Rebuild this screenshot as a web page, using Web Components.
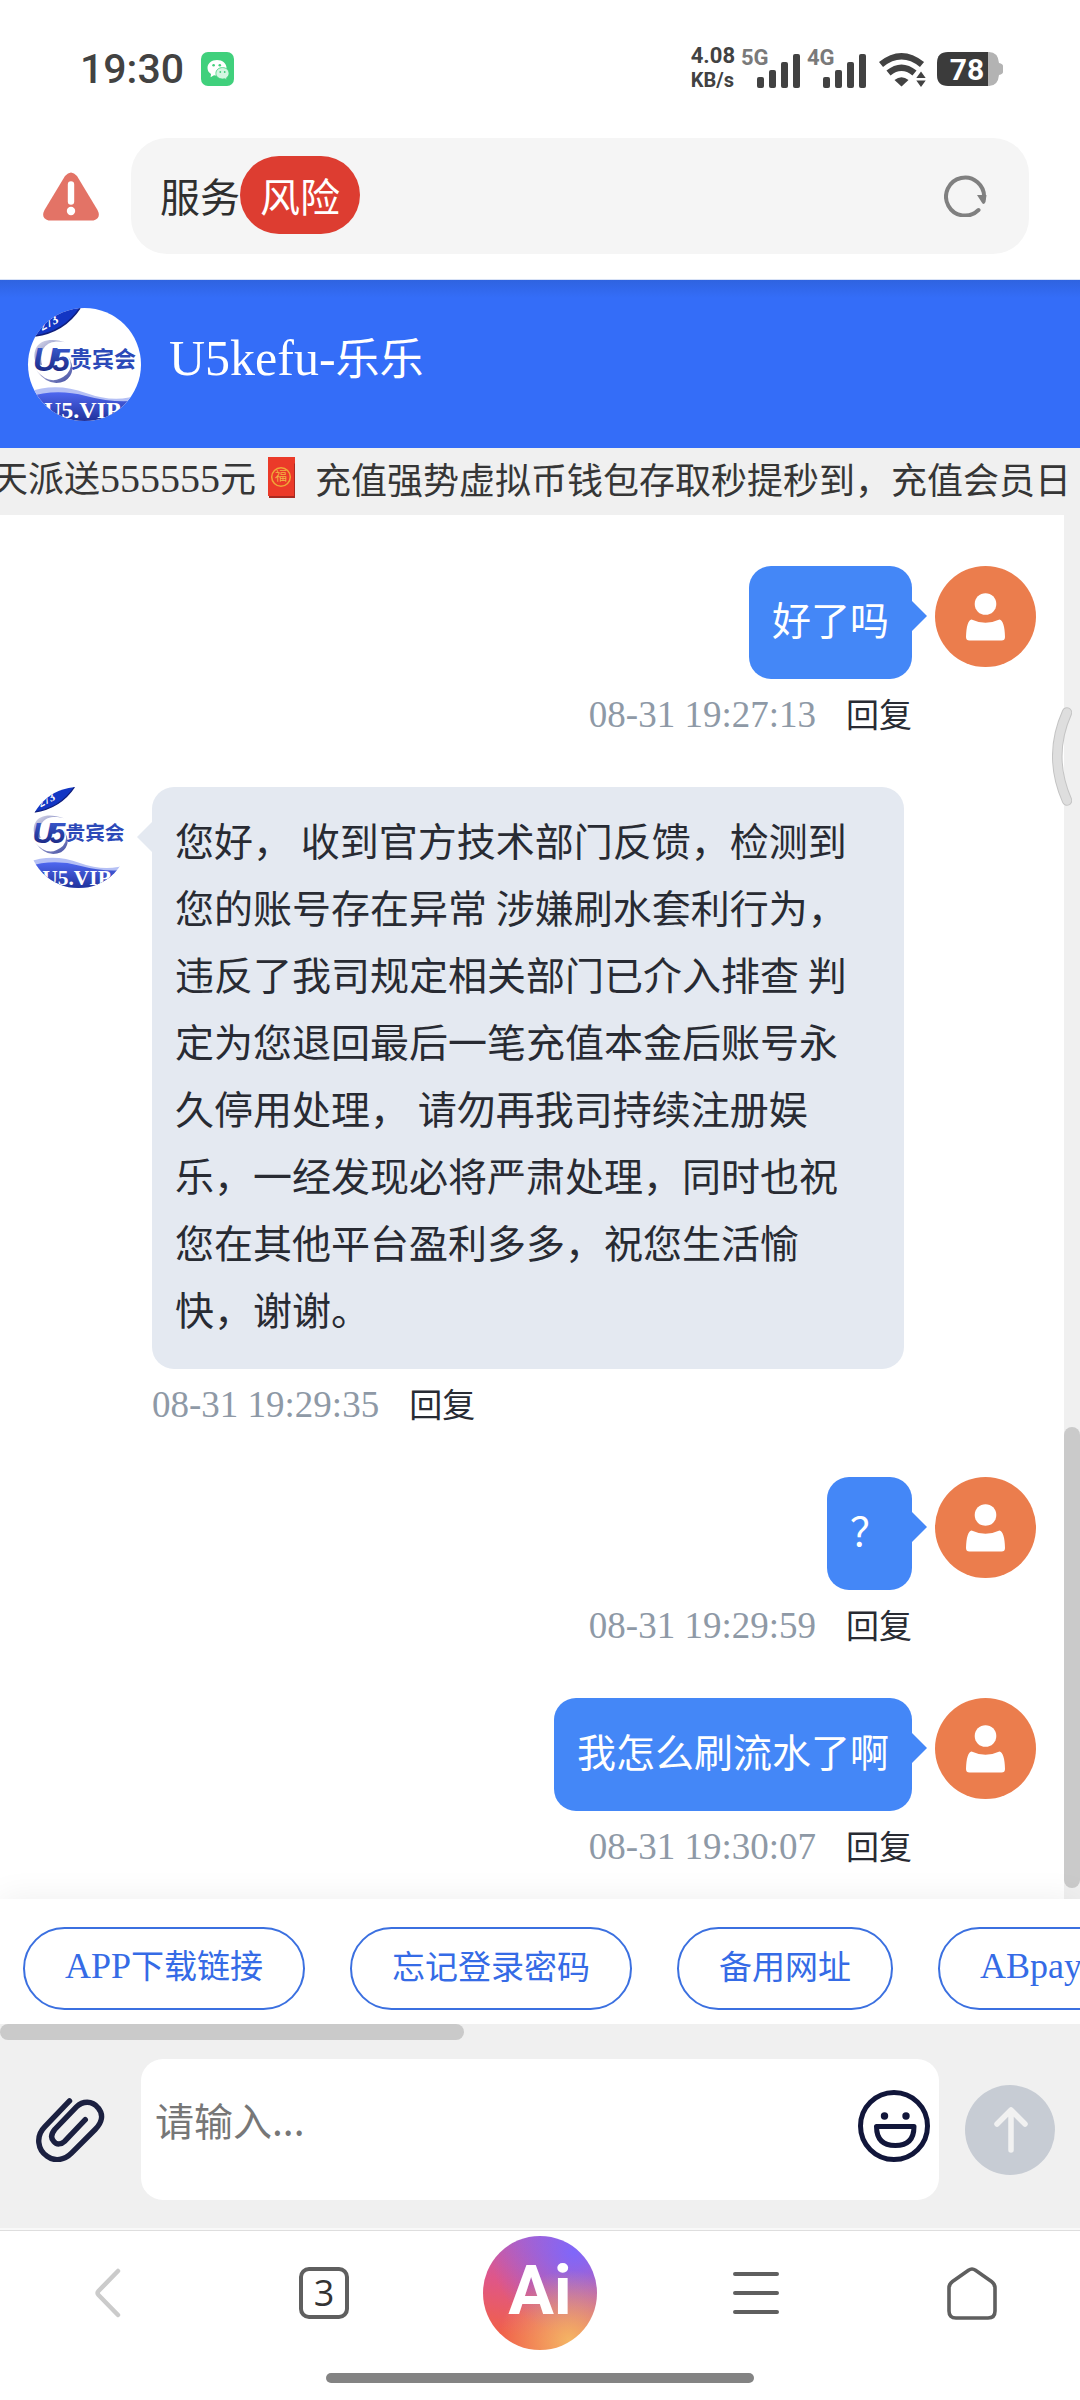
<!DOCTYPE html>
<html lang="zh-CN">
<head>
<meta charset="UTF-8">
<meta name="viewport" content="width=device-width, initial-scale=1.0">
<title>U5kefu-乐乐</title>
<style>
  :root {
    --brand: #346df8;
    --bubble-user: #4487f7;
    --bubble-agent: #e4e9f1;
    --surface: #f0f0f0;
    --thumb: #cacaca;
    --ink: #282b33;
    --muted: #8e99a6;
    --serif: "Liberation Serif", "Noto Sans CJK SC", serif;
    --sans: Roboto, "Noto Sans CJK SC", sans-serif;
  }
  body {
    margin: 0;
    background: #fff;
    color: var(--ink);
    font-family: "Noto Sans CJK SC", sans-serif;
    text-spacing-trim: space-all;
  }
  chat-page { min-height: 100vh; }
</style>
</head>
<body>
<chat-page>
  <status-bar></status-bar>
  <address-bar>服务</address-bar>
  <chat-header latin="U5kefu-">乐乐</chat-header>
  <notice-marquee></notice-marquee>
  <chat-log>
    <chat-message from="user" time="08-31 19:27:13">好了吗</chat-message>
    <chat-message from="agent" time="08-31 19:29:35">您好， 收到官方技术部门反馈，检测到您的账号存在异常 涉嫌刷水套利行为，违反了我司规定相关部门已介入排查 判定为您退回最后一笔充值本金后账号永久停用处理， 请勿再我司持续注册娱乐，一经发现必将严肃处理，同时也祝您在其他平台盈利多多，祝您生活愉快，谢谢。</chat-message>
    <chat-message from="user" time="08-31 19:29:59">？</chat-message>
    <chat-message from="user" time="08-31 19:30:07">我怎么刷流水了啊</chat-message>
  </chat-log>
  <quick-replies></quick-replies>
  <chat-composer></chat-composer>
  <browser-nav></browser-nav>
</chat-page>

<script>
// --- Base ---

const RESET = `
  :host, *, *::before, *::after { box-sizing: border-box; }
  button { margin: 0; padding: 0; border: 0; background: none; color: inherit; font: inherit; cursor: pointer; }
  svg { display: block; flex: none; }
`;

class BaseElement extends HTMLElement {
  constructor() {
    super();
    this.attachShadow({ mode: 'open' });
  }

  connectedCallback() {
    this.shadowRoot.innerHTML = `<style>${RESET}${this.styles()}</style>${this.render()}`;
  }

  styles() { return ':host { display: block; }'; }
  render() { return '<slot></slot>'; }
}

// --- Page shell ---

class ChatPage extends BaseElement {
  styles() {
    return `
      :host { display: flex; flex-direction: column; position: relative; overflow: hidden; }
      ::slotted(chat-log) { flex: 1; }
      .edge { position: absolute; right: 8px; top: 707px; z-index: 2; }
    `;
  }
  render() {
    return `
      <slot></slot>
      <svg class="edge" width="20" height="99" viewBox="0 0 20 99" aria-hidden="true">
        <path d="M15 5.500Q-4.500 49 15 93.500" fill="none" stroke="#c4c4c4" stroke-width="10.500" stroke-linecap="round"/>
        <path d="M15 5.500Q-4.500 49 15 93.500" fill="none" stroke="#dedede" stroke-width="8.500" stroke-linecap="round"/>
      </svg>
    `;
  }
}

// --- System status bar ---

class StatusBar extends BaseElement {
  styles() {
    return `
      :host { display: flex; align-items: center; height: 94px; padding: 44px 77px 0 80px; color: #424242; font-family: var(--sans); }
      .time { font-size: 41px; line-height: 50px; font-weight: 500; }
      .app { margin-left: 17px; }
      .speed { margin-left: auto; padding-bottom: 2px; font-size: 22px; line-height: 24px; font-weight: 700; }
      .speed div + div { font-size: 20px; }
      .signal { margin: 0 0 4px 6px; overflow: visible; }
      .wifi { margin-left: 12px; }
      .battery { margin-left: 11px; }
      text { font-family: var(--sans); font-weight: 700; }
    `;
  }
  signal(label) {
    return `
      <svg class="signal" width="60" height="42" viewBox="0 -4 60 42">
        <text x="0" y="15" font-size="22" fill="#7a7a7a">${label}</text>
        <g fill="#424242">
          <rect x="16" y="27" width="7" height="11" rx="2"/><rect x="28" y="20" width="7" height="18" rx="2"/>
          <rect x="40" y="12" width="7" height="26" rx="2"/><rect x="52" y="4" width="7" height="34" rx="2"/>
        </g>
      </svg>`;
  }
  render() {
    return `
      <span class="time">19:30</span>
      <svg class="app" width="33" height="34" viewBox="0 0 33 34">
        <rect width="33" height="34" rx="7" fill="#40d07c"/>
        <path d="M16 8c-5.500 0-9.500 3.500-9.500 8 0 2.500 1.300 4.600 3.500 6l-.4 3.200 3.400-1.900c1 .2 2 .3 3 .3 5.500 0 9.500-3.300 9.500-7.700S21.500 8 16 8z" fill="#fff"/>
        <path d="M21.500 15.600c-3.800 0-6.600 2.400-6.600 5.700s2.800 5.700 6.600 5.700c.8 0 1.500-.1 2.200-.3l2.100 1-.3-1.900c1.600-1 2.500-2.600 2.500-4.500 0-3.300-2.700-5.700-6.500-5.700z" fill="#d3f6e1" stroke="#40d07c" stroke-width=".8"/>
        <g fill="#40d07c"><circle cx="12.600" cy="13.300" r="1.300"/><circle cx="18.800" cy="13.300" r="1.300"/><circle cx="19.300" cy="20" r=".9"/><circle cx="23.700" cy="20" r=".9"/></g>
      </svg>
      <div class="speed"><div>4.08</div><div>KB/s</div></div>
      ${this.signal('5G')}
      ${this.signal('4G')}
      <svg class="wifi" width="47" height="35" viewBox="0 0 47 35">
        <g fill="none" stroke="#424242" stroke-width="6.500">
          <path d="M2 12.500Q22.500-4 43 12.500"/><path d="M9.500 21Q22.500 10.500 35.500 21"/>
        </g>
        <path d="M15.500 28q7-5.500 14 0l-7 6.500z" fill="#424242"/>
        <path d="M42 17l7 9v9H35v-9z" fill="#fff"/>
        <path d="M42 19.500l4.700 6.500h-9.400zM42 35l-4.700-6.500h9.400z" fill="#424242"/>
      </svg>
      <svg class="battery" width="66" height="34" viewBox="0 0 66 34">
        <path d="M50 0h2q9 0 10 11 4 1 4 3v6q0 2-4 3-1 11-10 11h-2z" fill="#b3b3b3"/>
        <path d="M11 0h40v34H11Q0 34 0 23V11Q0 0 11 0z" fill="#3b3b3b"/>
        <text x="30" y="28" text-anchor="middle" font-size="30" fill="#fff">78</text>
      </svg>
    `;
  }
}

// --- Browser address bar ---

class AddressBar extends BaseElement {
  styles() {
    return `
      :host { display: flex; align-items: center; gap: 32px; padding: 44px 51px 25px 43px; border-bottom: 1px solid #d8e2f6; color: #2f2f2f; }
      .field { flex: 1; display: flex; align-items: center; height: 116px; padding: 0 42px 2px 29px; border-radius: 36px; background: #f5f5f5; font-size: 40px; line-height: 48px; }
      .risk { display: flex; align-items: center; height: 78px; padding: 0 20px; border-radius: 39px; background: #dd3d31; color: #fff; }
      .reload { margin-left: auto; }
    `;
  }
  render() {
    return `
      <svg width="56" height="49" viewBox="0 0 56 49">
        <path d="M22 4q6-7 12 0l20.500 34q4 8-4 10.500h-45q-8-2.500-4-10.500z" fill="#e37366"/>
        <path d="M28 12.500v17" stroke="#fff" stroke-width="6.400" stroke-linecap="round"/>
        <circle cx="28" cy="39" r="4.200" fill="#fff"/>
      </svg>
      <div class="field">
        <slot></slot>
        <span class="risk">风险</span>
        <button class="reload" aria-label="刷新">
          <svg width="43" height="43" viewBox="0 0 43 43">
            <path d="M40 24A19 19 0 1 0 34.500 36" fill="none" stroke="#808080" stroke-width="4" stroke-linecap="round"/>
            <path d="M33 21h9.500l-1 7q-2 4-4 0z" fill="#808080"/>
          </svg>
        </button>
      </div>
    `;
  }
}

// --- Avatars ---

class BrandAvatar extends BaseElement {
  styles() {
    return `
      :host { display: block; flex: none; border-radius: 50%; overflow: hidden; background: #fff; }
      svg { width: 100%; height: 100%; }
    `;
  }
  render() {
    return `
      <svg viewBox="0 0 113 113" role="img" aria-label="U5贵宾会">
        <defs>
          <linearGradient id="wave" x1="0" y1="0" x2="0" y2="1"><stop offset="0" stop-color="#4f68f0"/><stop offset="1" stop-color="#20329c"/></linearGradient>
          <linearGradient id="ink" x1="0" y1="0" x2="0" y2="1"><stop offset="0" stop-color="#3f63dd"/><stop offset="1" stop-color="#151f74"/></linearGradient>
          <linearGradient id="ring" x1="0" y1="0" x2="1" y2="1"><stop offset="0" stop-color="#e4e3ee"/><stop offset="1" stop-color="#3a46a0"/></linearGradient>
        </defs>
        <path d="M0 0h52Q36 24 7 28H0z" fill="#1236c4"/>
        <path d="M52 0Q36 24 7 28" fill="none" stroke="#101f7c" stroke-width="1.500"/>
        <text x="14" y="23" transform="rotate(-28 14 23)" font-family="Liberation Serif" font-weight="700" font-size="13" fill="#fff">273</text>
        <path d="M8 56C2 38 14 26 40 35 22 30 10 38 14 57z" fill="url(#ring)"/>
        <path d="M8 62Q23 80 39 66q7-8 1-18 10 16-3 25-16 7-29-11z" fill="url(#ring)"/>
        <text x="5" y="63" font-family="Liberation Sans" font-weight="700" font-style="italic" font-size="33" fill="url(#ink)">U<tspan x="24" font-size="32">5</tspan></text>
        <text x="42" y="59" font-family="Noto Sans CJK SC" font-weight="700" font-size="22" fill="#2c49b8">贵宾会</text>
        <path d="M0 84Q28 74 58 85t55 1v27H0z" fill="#b5c0f5"/>
        <path d="M0 89Q28 80 58 88t55 4v21H0z" fill="url(#wave)"/>
        <text x="16" y="110" font-family="Liberation Serif" font-weight="700" font-size="24" fill="#fff">U5.VIP</text>
      </svg>
    `;
  }
}

class UserAvatar extends BaseElement {
  styles() {
    return `
      :host { display: block; flex: none; }
      svg { width: 100%; height: 100%; }
    `;
  }
  render() {
    return `
      <svg viewBox="0 0 101 101" role="img" aria-label="用户">
        <circle cx="50.500" cy="50.500" r="50.500" fill="#eb7d4d"/>
        <circle cx="50.500" cy="38" r="10.800" fill="#fff"/>
        <path d="M36.500 53.500Q50.500 60 64.500 53.500 69.500 54.500 70 71q0 3.500-3.500 3.500h-32Q31 74.500 31 71 31.500 54.500 36.500 53.500z" fill="#fff"/>
      </svg>
    `;
  }
}

// --- Chat header and notice ---

class ChatHeader extends BaseElement {
  styles() {
    return `
      :host { display: flex; align-items: center; gap: 28px; height: 168px; padding: 0 28px; background: linear-gradient(#2f63e0, var(--brand) 18px); color: #fff; }
      brand-avatar { width: 113px; height: 113px; }
      h1 { margin: 0; padding-bottom: 14px; font-size: 44px; line-height: 56px; font-weight: 400; }
      .latin { font-family: var(--serif); font-size: 50px; }
    `;
  }
  render() {
    return `<brand-avatar></brand-avatar><h1><span class="latin">${this.getAttribute('latin')}</span><slot></slot></h1>`;
  }
}

class NoticeMarquee extends BaseElement {
  styles() {
    return `
      :host { display: block; overflow: hidden; height: 67px; background: var(--surface); color: #363636; }
      .track { display: flex; align-items: center; margin-left: -8px; font-size: 36px; line-height: 56px; white-space: nowrap; }
      .num { font-family: var(--serif); font-size: 40px; }
      svg { margin: 0 19px 0 12px; }
    `;
  }
  render() {
    return `
      <div class="track">
        <span>天派送<span class="num">555555</span>元</span>
        <svg width="28" height="41" viewBox="0 0 28 41">
          <rect x="1" y="1" width="26" height="40" fill="#a92a20"/>
          <path d="M0 0h27v6l-1 1v32H0z" fill="#eb3a29"/>
          <circle cx="13" cy="20" r="9.300" fill="none" stroke="#f0a638" stroke-width="1.500"/>
          <text x="13" y="24" text-anchor="middle" font-family="Noto Sans CJK SC" font-size="12" fill="#f3b544">福</text>
        </svg>
        <span>充值强势虚拟币钱包存取秒提秒到，充值会员日</span>
      </div>
    `;
  }
}

// --- Chat log ---

class ChatLog extends BaseElement {
  styles() {
    return `
      :host { display: flex; }
      .list { flex: 1; display: flex; flex-direction: column; gap: 48px; padding: 51px 28px 0; }
      .rail { display: flex; flex-direction: column; justify-content: flex-end; width: 16px; padding-bottom: 11px; background: var(--surface); }
      .thumb { height: 461px; border-radius: 8px; background: var(--thumb); }
    `;
  }
  render() {
    return '<div class="list"><slot></slot></div><div class="rail"><div class="thumb"></div></div>';
  }
}

class ChatMessage extends BaseElement {
  styles() {
    return `
      :host { display: flex; align-items: flex-start; gap: 23px; }
      :host([from="user"]) { flex-direction: row-reverse; }
      brand-avatar, user-avatar { width: 101px; height: 101px; }
      .body { display: flex; flex-direction: column; gap: 12px; align-items: flex-start; }
      .bubble { position: relative; padding: 19px 23px 27px; border-radius: 22px; font-size: 39px; line-height: 67px; }
      .bubble::before { content: ""; position: absolute; top: 35px; border: 15px solid transparent; }
      .meta { display: flex; align-items: center; gap: 30px; height: 48px; font-size: 33px; line-height: 44px; }
      .meta button { padding-bottom: 4px; }
      time { color: var(--muted); font-family: var(--serif); font-size: 37px; }

      :host([from="agent"]) .body { margin-right: 132px; }
      :host([from="agent"]) .bubble { padding-right: 33px; background: var(--bubble-agent); }
      :host([from="agent"]) .bubble::before { right: 100%; border-left-width: 0; border-right-color: var(--bubble-agent); }

      :host([from="user"]) .body { align-items: flex-end; }
      :host([from="user"]) .bubble { background: var(--bubble-user); color: #fff; }
      :host([from="user"]) .bubble::before { left: 100%; border-right-width: 0; border-left-color: var(--bubble-user); }
    `;
  }
  render() {
    const avatar = this.getAttribute('from') === 'agent' ? 'brand-avatar' : 'user-avatar';
    return `
      <${avatar}></${avatar}>
      <div class="body">
        <div class="bubble"><slot></slot></div>
        <div class="meta"><time>${this.getAttribute('time')}</time><button>回复</button></div>
      </div>
    `;
  }
}

// --- Quick replies ---

class QuickReplies extends BaseElement {
  styles() {
    return `
      :host { display: block; position: relative; background: #fff; box-shadow: 0 0 32px rgba(0, 0, 0, .07); }
      .list { display: flex; gap: 45px; overflow: hidden; padding: 28px 23px 14px; }
      .list button { flex: none; height: 83px; padding: 0 40px 8px; border: 2px solid #3b70e0; border-radius: 42px; color: #356be6; font-size: 33px; line-height: 48px; white-space: nowrap; }
      .latin { font-family: var(--serif); font-size: 36px; }
      .rail { height: 16px; background: var(--surface); }
      .thumb { width: 43%; height: 16px; border-radius: 8px; background: var(--thumb); }
    `;
  }
  render() {
    return `
      <div class="list">
        <button><span class="latin">APP</span>下载链接</button>
        <button>忘记登录密码</button>
        <button>备用网址</button>
        <button><span class="latin">ABpay</span></button>
      </div>
      <div class="rail"><div class="thumb"></div></div>
    `;
  }
}

// --- Composer ---

class ChatComposer extends BaseElement {
  styles() {
    return `
      :host { display: flex; align-items: center; position: relative; padding: 19px 25px 28px 36px; background: var(--surface); }
      .box { flex: 1; display: flex; align-items: center; margin: 0 26px 0 36px; padding-right: 9px; border-radius: 22px; background: #fff; }
      textarea { flex: 1; min-width: 0; height: 141px; padding: 32px 0 0 14px; border: 0; outline: 0; resize: none; background: none; color: var(--ink); font-family: "Noto Sans CJK SC", sans-serif; font-size: 39px; line-height: 56px; }
      textarea::placeholder { color: #777; opacity: 1; }
      .smile { padding-bottom: 8px; }
    `;
  }
  render() {
    return `
      <button aria-label="附件">
        <svg width="69" height="65" viewBox="0 0 70 66" fill="none" stroke="#1b2040" stroke-width="5.500" stroke-linecap="round">
          <path d="M34 4L9 30C-1 40 2 54 11 60c8 6 18 4 25-3L60 33c7-7 9-15 3-22C57 3 47 4 41 10L19 33c-4 5-4 9-1 12 3 4 8 3 11 0L50 23"/>
        </svg>
      </button>
      <div class="box">
        <textarea aria-label="请输入" placeholder="请输入..."></textarea>
        <button class="smile" aria-label="表情">
          <svg width="72" height="72" viewBox="0 0 72 72" fill="none" stroke="#11163a" stroke-width="5">
            <circle cx="36" cy="36" r="33.500"/>
            <path d="M18.500 36.500h37.500q0 19-18.700 19t-18.800-19z" stroke-linejoin="round"/>
            <circle cx="26.500" cy="26" r="3.700" fill="#11163a" stroke="none"/><circle cx="48" cy="26" r="3.700" fill="#11163a" stroke="none"/>
          </svg>
        </button>
      </div>
      <button aria-label="发送">
        <svg width="90" height="90" viewBox="0 0 90 90">
          <circle cx="45" cy="45" r="45" fill="#c7ccd4"/>
          <path d="M46 65V26M32 39l14-14 14 14" fill="none" stroke="#f1f1f1" stroke-width="5.500" stroke-linecap="round" stroke-linejoin="round"/>
        </svg>
      </button>
    `;
  }
}

// --- Browser bottom navigation ---

class BrowserNav extends BaseElement {
  styles() {
    return `
      :host { display: block; position: relative; border-top: 2px solid #f9f9f9; background: #fff; }
      nav { display: grid; grid-template-columns: repeat(5, 1fr); align-items: center; justify-items: center; height: 127px; padding-bottom: 2px; border-top: 1px solid #dedede; }
      .tabs { width: 50px; height: 52px; border: 4px solid #5f5f5f; border-radius: 10px; color: #333; font-family: "Open Sans", sans-serif; font-size: 36px; line-height: 42px; }
      .ai {
        width: 114px; height: 114px; padding-bottom: 4px; border-radius: 50%; color: #fff; font-family: var(--sans); font-size: 68px; line-height: 110px; font-weight: 700;
        background:
          radial-gradient(circle at 76% 92%, #f4b565, rgba(244, 181, 101, 0) 52%),
          radial-gradient(circle at 80% 14%, #7f67fa, rgba(127, 103, 250, 0) 62%),
          linear-gradient(190deg, #b060c8, #df5689 45%, #f0604a 85%);
      }
      .home-bar { width: 428px; height: 10px; margin: 16px auto 17px; border-radius: 5px; background: #838383; }
    `;
  }
  render() {
    return `
      <nav>
        <button aria-label="后退">
          <svg width="26" height="50" viewBox="0 0 26 50"><path d="M23 3L3.500 23q-2 2 0 4L23 47" fill="none" stroke="#cbcbcb" stroke-width="4.500" stroke-linecap="round"/></svg>
        </button>
        <button class="tabs">3</button>
        <button class="ai">Ai</button>
        <button aria-label="菜单">
          <svg width="46" height="42" viewBox="0 0 46 42"><path d="M2 2h42M2 21h42M2 40h42" stroke="#5f5f5f" stroke-width="4" stroke-linecap="round"/></svg>
        </button>
        <button aria-label="主页">
          <svg width="50" height="53" viewBox="0 0 50 53"><path d="M21.500 3.200q3.500-2.400 7 0L44.500 14.500Q48 17 48 21v23q0 7-7 7H9q-7 0-7-7V21q0-4 3.500-6.500z" fill="none" stroke="#5f5f5f" stroke-width="3.600"/></svg>
        </button>
      </nav>
      <div class="home-bar"></div>
    `;
  }
}

customElements.define('chat-page', ChatPage);
customElements.define('status-bar', StatusBar);
customElements.define('address-bar', AddressBar);
customElements.define('brand-avatar', BrandAvatar);
customElements.define('user-avatar', UserAvatar);
customElements.define('chat-header', ChatHeader);
customElements.define('notice-marquee', NoticeMarquee);
customElements.define('chat-log', ChatLog);
customElements.define('chat-message', ChatMessage);
customElements.define('quick-replies', QuickReplies);
customElements.define('chat-composer', ChatComposer);
customElements.define('browser-nav', BrowserNav);
</script>
</body>
</html>
